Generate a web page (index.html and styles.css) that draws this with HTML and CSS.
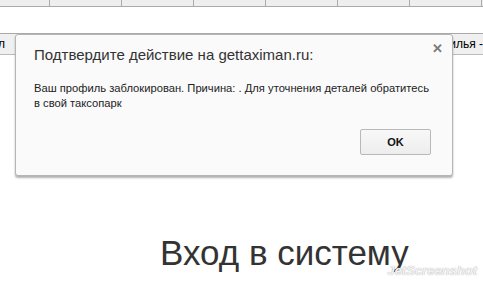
FILE: index.html
```html
<!DOCTYPE html>
<html lang="ru">
<head>
    <meta charset="UTF-8">
    <title>Вход в систему</title>
    <link rel="stylesheet" href="styles.css">
</head>
<body>
<div id="page">
    <div class="tab-strip">
        <span class="tab first"></span>
        <span class="tab"></span>
        <span class="tab"></span>
        <span class="tab"></span>
        <span class="tab"></span>
        <span class="tab"></span>
        <span class="tab"></span>
    </div>
    <div class="address-area"></div>
    <div class="menu-bar">
        <span class="menu-left">л</span>
        <span class="menu-right">илья -</span>
    </div>
    <h1 class="login-title">Вход в систему</h1>
    <span class="watermark">JetScreenshot</span>

    <div class="dialog">
        <span class="dialog-close">✕</span>
        <div class="dialog-title">Подтвердите действие на gettaximan.ru:</div>
        <div class="dialog-text">Ваш профиль заблокирован. Причина: . Для уточнения деталей обратитесь в свой таксопарк</div>
        <div class="dialog-buttons">
            <button class="dialog-ok">OK</button>
        </div>
    </div>
</div>
</body>
</html>
```
FILE: styles.css
```css
body {
    margin: 0;
    padding: 0;
    background-color: #FFFFFF;
    font-family: "Liberation Sans", Arial, sans-serif;
    color: #333333;
    overflow: hidden;
}

#page {
    position: relative;
    width: 483px;
    height: 282px;
}

.tab-strip {
    display: flex;
    height: 6px;
    background-color: #EEEEEE;
    border-bottom: 1px solid #AAAAAA;
}

.tab {
    width: 71px;
    border-right: 1px solid #AAAAAA;
}

.tab.first {
    width: 49px;
}

.address-area {
    height: 26px;
}

.menu-bar {
    display: flex;
    justify-content: space-between;
    align-items: center;
    height: 20px;
    background-color: #F0F0F0;
    border-top: 1px solid #AAAAAA;
    border-bottom: 1px solid #BBBBBB;
    font-size: 12px;
    color: #000000;
}

.menu-left {
    margin-left: -2px;
}

.login-title {
    margin: 178px 0 0 160px;
    font-size: 35px;
    font-weight: normal;
    color: #333333;
    line-height: 40px;
    white-space: nowrap;
}

.dialog {
    position: absolute;
    top: 34px;
    left: 15px;
    width: 438px;
    height: 142px;
    background-color: #FAFAFA;
    border: 1px solid #B5B5B5;
    border-radius: 3px;
    box-shadow: 0 2px 2px rgba(0, 0, 0, 0.3);
    box-sizing: border-box;
    padding: 10px 20px 0 18px;
}

.dialog-close {
    position: absolute;
    top: 6px;
    right: 9px;
    font-size: 13px;
    font-weight: bold;
    color: #7A7A7A;
}

.dialog-title {
    font-size: 15px;
    line-height: 20px;
    color: #333333;
}

.dialog-text {
    margin-top: 16px;
    font-size: 11.2px;
    line-height: 15px;
    color: #222222;
}

.dialog-buttons {
    display: flex;
    justify-content: flex-end;
    margin-top: 18px;
    padding-right: 1px;
}

.dialog-ok {
    width: 71px;
    height: 26px;
    background: linear-gradient(#F8F8F8, #EDEDED);
    border: 1px solid #B8B8B8;
    border-radius: 2px;
    font-family: "Liberation Sans", Arial, sans-serif;
    font-size: 11px;
    font-weight: bold;
    color: #111111;
}

.watermark {
    position: absolute;
    right: 6px;
    bottom: 4px;
    font-size: 13px;
    font-style: italic;
    font-weight: bold;
    color: #F2F2F2;
    text-shadow: 0 0 1px #999999;
}
```
